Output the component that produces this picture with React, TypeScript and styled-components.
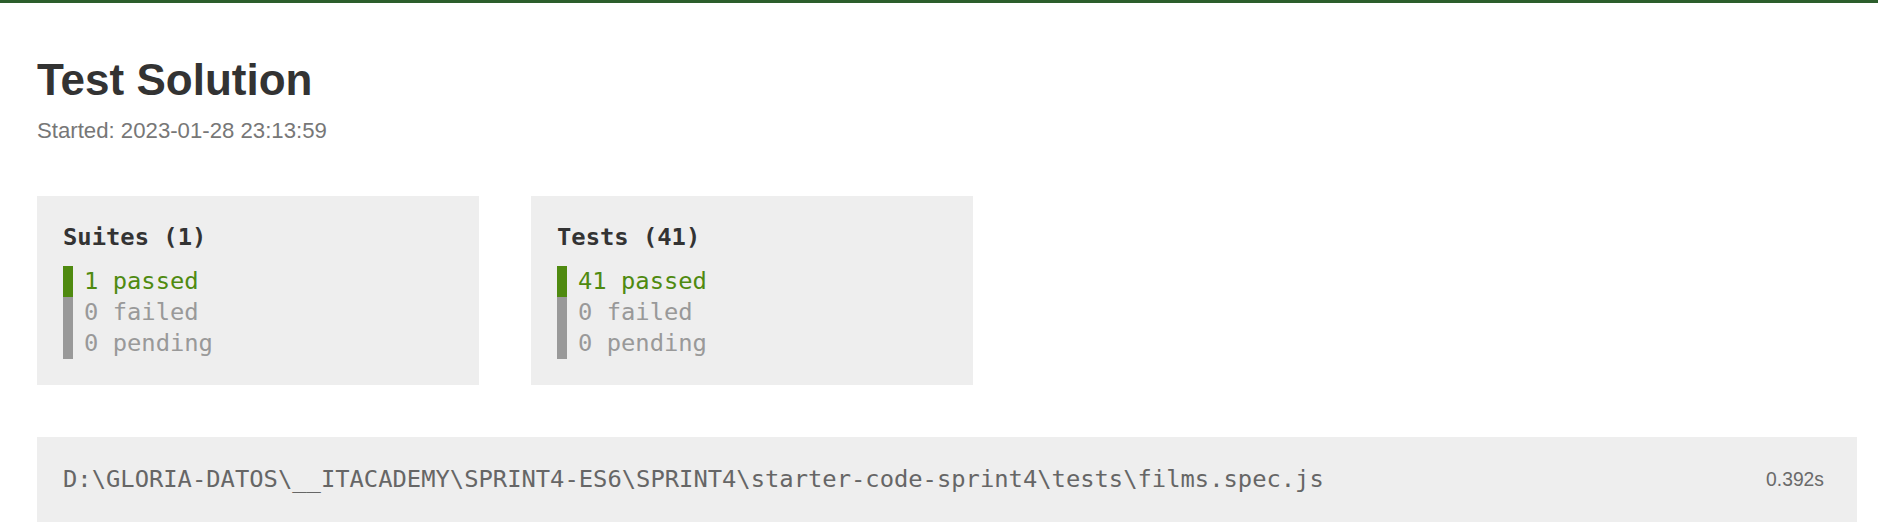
import React from "react";
import styled, { createGlobalStyle } from "styled-components";

const GlobalStyle = createGlobalStyle`
  html, body {
    margin: 0;
    padding: 0;
    background: #ffffff;
    font-family: "Liberation Sans", Arial, Helvetica, sans-serif;
    color: #333333;
  }
`;

const Page = styled.div`
  border-top: 3px solid #2c5e2c;
  padding: 52px 21px 0 37px;
`;

const Title = styled.h1`
  margin: 0;
  font-size: 44px;
  line-height: 50px;
  font-weight: bold;
  color: #333333;
`;

const Timestamp = styled.div`
  margin-top: 13px;
  font-size: 22.2px;
  line-height: 25px;
  color: #777777;
`;

const Summary = styled.div`
  display: flex;
  gap: 52px;
  margin-top: 53px;
  font-family: "DejaVu Sans Mono", "Liberation Mono", monospace;
  font-size: 23.8px;
`;

const SummaryCard = styled.div`
  box-sizing: border-box;
  width: 442px;
  background: #eeeeee;
  padding: 26px;
`;

const SummaryTotal = styled.div`
  font-weight: bold;
  line-height: 31px;
  margin-bottom: 13px;
  color: #333333;
`;

const SummaryItem = styled.div<{ $tone: "passed" | "empty" }>`
  line-height: 31px;
  padding-left: 11px;
  border-left: 10px solid ${(p) => (p.$tone === "passed" ? "#4f8a10" : "#999999")};
  color: ${(p) => (p.$tone === "passed" ? "#4f8a10" : "#999999")};
`;

const SuiteInfo = styled.div`
  display: flex;
  align-items: center;
  margin-top: 52px;
  background: #eeeeee;
  padding: 26px;
`;

const SuitePath = styled.div`
  flex-grow: 1;
  word-break: break-all;
  font-family: "DejaVu Sans Mono", "Liberation Mono", monospace;
  font-size: 23.8px;
  line-height: 33px;
  color: #666666;
`;

const SuiteTime = styled.div`
  margin-left: 10px;
  padding: 4px 7px;
  font-size: 19.3px;
  line-height: 22px;
  color: #6a6a6a;
`;

type Counts = { title: string; total: number; passed: number; failed: number; pending: number };

const summaries: Counts[] = [
  { title: "Suites", total: 1, passed: 1, failed: 0, pending: 0 },
  { title: "Tests", total: 41, passed: 41, failed: 0, pending: 0 },
];

export default function App() {
  return (
    <>
      <GlobalStyle />
      <Page>
        <Title>Test Solution</Title>
        <Timestamp>Started: 2023-01-28 23:13:59</Timestamp>
        <Summary>
          {summaries.map((s) => (
            <SummaryCard key={s.title}>
              <SummaryTotal>
                {s.title} ({s.total})
              </SummaryTotal>
              <SummaryItem $tone={s.passed > 0 ? "passed" : "empty"}>{s.passed} passed</SummaryItem>
              <SummaryItem $tone="empty">{s.failed} failed</SummaryItem>
              <SummaryItem $tone="empty">{s.pending} pending</SummaryItem>
            </SummaryCard>
          ))}
        </Summary>
        <SuiteInfo>
          <SuitePath>
            D:\GLORIA-DATOS\__ITACADEMY\SPRINT4-ES6\SPRINT4\starter-code-sprint4\tests\films.spec.js
          </SuitePath>
          <SuiteTime>0.392s</SuiteTime>
        </SuiteInfo>
      </Page>
    </>
  );
}
